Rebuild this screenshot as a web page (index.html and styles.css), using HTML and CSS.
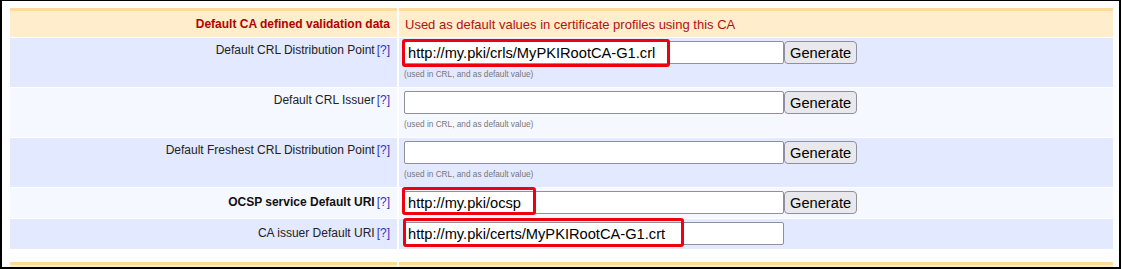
FILE: index.html
```html
<!DOCTYPE html>
<html>
<head>
<meta charset="utf-8">
<title>CA defaults</title>
<link rel="stylesheet" href="styles.css">
</head>
<body>
<div class="frame">
  <table class="ca-table">
    <colgroup><col class="col-label"><col class="col-value"></colgroup>
    <tr class="section">
      <th class="label">Default CA defined validation data</th>
      <td class="value">Used as default values in certificate profiles using this CA</td>
    </tr>
    <tr class="row row-tall odd">
      <td class="label">Default CRL Distribution Point<a class="help" href="#">[?]</a></td>
      <td class="value"><div class="field"><input class="text" type="text" value="http://my.pki/crls/MyPKIRootCA-G1.crl"><button class="btn" type="button">Generate</button></div><div class="note">(used in CRL, and as default value)</div></td>
    </tr>
    <tr class="row row-tall even">
      <td class="label">Default CRL Issuer<a class="help" href="#">[?]</a></td>
      <td class="value"><div class="field"><input class="text" type="text" value=""><button class="btn" type="button">Generate</button></div><div class="note">(used in CRL, and as default value)</div></td>
    </tr>
    <tr class="row row-tall odd">
      <td class="label">Default Freshest CRL Distribution Point<a class="help" href="#">[?]</a></td>
      <td class="value"><div class="field"><input class="text" type="text" value=""><button class="btn" type="button">Generate</button></div><div class="note">(used in CRL, and as default value)</div></td>
    </tr>
    <tr class="row row-short even">
      <td class="label label-low label-strong">OCSP service Default URI<a class="help" href="#">[?]</a></td>
      <td class="value"><div class="field"><input class="text" type="text" value="http://my.pki/ocsp"><button class="btn" type="button">Generate</button></div></td>
    </tr>
    <tr class="row row-short odd">
      <td class="label label-low">CA issuer Default URI<a class="help" href="#">[?]</a></td>
      <td class="value"><div class="field"><input class="text" type="text" value="http://my.pki/certs/MyPKIRootCA-G1.crt"></div></td>
    </tr>
  </table>
  <table class="ca-table ca-table-next">
    <colgroup><col class="col-label"><col class="col-value"></colgroup>
    <tr class="section">
      <th class="label">&nbsp;</th>
      <td class="value">&nbsp;</td>
    </tr>
  </table>
  <div class="mark mark-crl"></div>
  <div class="mark mark-ocsp"></div>
  <div class="mark mark-issuer"></div>
</div>
</body>
</html>
```
FILE: styles.css
```css
* {
  box-sizing: border-box;
}

html, body {
  margin: 0;
  padding: 0;
  background: #fff;
}

.frame {
  position: relative;
  width: 1121px;
  height: 269px;
  border: 2px solid #000;
  border-top-width: 1px;
  padding: 6px 4px 0 6px;
  overflow: hidden;
  font-family: "Liberation Sans", Arial, sans-serif;
  font-size: 12px;
  color: #222;
}

.ca-table {
  border-collapse: separate;
  border-spacing: 2px 1px;
  width: 1107px;
  table-layout: fixed;
}

.ca-table-next {
  margin-top: 11px;
}

.col-label {
  width: 387px;
}

.col-value {
  width: 714px;
}

.label {
  text-align: right;
  vertical-align: top;
  padding: 5px 7px 0 4px;
  font-weight: normal;
  white-space: nowrap;
}

.value {
  vertical-align: top;
  padding: 3px 5px;
  text-align: left;
}

.section {
  height: 29px;
}

.section .label,
.section .value {
  background: #ffedcb;
  border-top: 3px solid #fddc9a;
  vertical-align: middle;
  padding-top: 0;
  padding-bottom: 0;
  color: #b30000;
}

.section .label {
  font-weight: bold;
}

.section .value {
  padding-left: 6px;
  font-size: 13px;
  color: #b31010;
}

.row-tall {
  height: 49px;
}

.row-short {
  height: 30px;
}

.odd td {
  background: #e3e9ff;
}

.even td {
  background: #f6f8ff;
}

.label-low {
  padding-top: 7px;
}

.label-strong {
  font-weight: bold;
  color: #111;
}

.help {
  color: #3333bb;
  text-decoration: none;
  font-weight: normal;
  margin-left: 2px;
}

.field {
  display: flex;
  align-items: flex-start;
}

.text {
  width: 380px;
  height: 23px;
  margin: 0;
  padding: 1px 3px;
  border: 1px solid #8f8f9d;
  border-radius: 2px;
  background: #fff;
  color: #000;
  font-family: "Liberation Sans", Arial, sans-serif;
  font-size: 14.67px;
}

.btn {
  height: 23px;
  margin: 0;
  padding: 0 5px;
  border: 1px solid #8f8f9d;
  border-radius: 4px;
  background: #e9e9ed;
  color: #000;
  font-family: "Liberation Sans", Arial, sans-serif;
  font-size: 14.67px;
}

.note {
  margin-top: 6px;
  font-size: 8.25px;
  line-height: 10px;
  color: #777;
}

.mark {
  position: absolute;
  border: 3px solid #ee0010;
  border-radius: 3px;
}

.mark-crl {
  left: 400px;
  top: 38px;
  width: 268px;
  height: 28px;
}

.mark-ocsp {
  left: 400px;
  top: 186px;
  width: 134px;
  height: 28px;
}

.mark-issuer {
  left: 401px;
  top: 217px;
  width: 281px;
  height: 29px;
}
```
